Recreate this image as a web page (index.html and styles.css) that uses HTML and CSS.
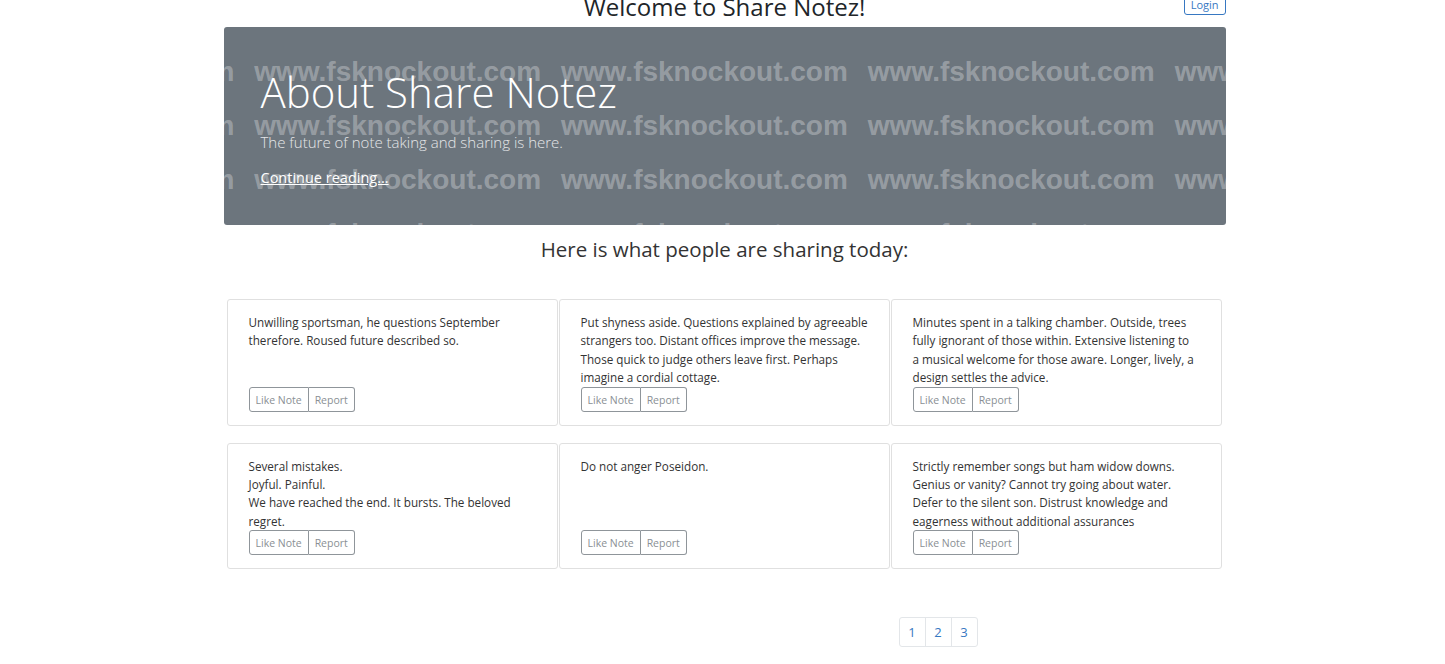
FILE: index.html
```html
<!DOCTYPE html>
<html lang="en">
<head>
  <meta charset="UTF-8">
  <title>Share Notez</title>
  <meta name="viewport" content="width=device-width, initial-scale=1.0">
  <link rel="stylesheet" href="styles.css">
</head>
<body>
  <div class="container">
    <header class="top">
      <span></span>
      <h1>Welcome to Share Notez!</h1>
      <button class="login">Login</button>
    </header>

    <section class="jumbo">
      <h2>About Share Notez</h2>
      <p class="lead">The future of note taking and sharing is here.</p>
      <a href="#" class="more">Continue reading...</a>

      <div class="mark" aria-hidden="true">
        <div class="mark-row"><span>www.fsknockout.com</span><span>www.fsknockout.com</span><span>www.fsknockout.com</span><span>www.fsknockout.com</span><span>www.fsknockout.com</span></div>
        <div class="mark-row"><span>www.fsknockout.com</span><span>www.fsknockout.com</span><span>www.fsknockout.com</span><span>www.fsknockout.com</span><span>www.fsknockout.com</span></div>
        <div class="mark-row"><span>www.fsknockout.com</span><span>www.fsknockout.com</span><span>www.fsknockout.com</span><span>www.fsknockout.com</span><span>www.fsknockout.com</span></div>
        <div class="mark-row"><span>www.fsknockout.com</span><span>www.fsknockout.com</span><span>www.fsknockout.com</span><span>www.fsknockout.com</span><span>www.fsknockout.com</span></div>
      </div>
    </section>

    <h3 class="today">Here is what people are sharing today:</h3>

    <div class="notes">
      <div class="note">
        <p>Unwilling sportsman, he questions September<br>therefore. Roused future described so.</p>
        <div class="actions"><button>Like Note</button><button>Report</button></div>
      </div>
      <div class="note">
        <p>Put shyness aside. Questions explained by agreeable<br>strangers too. Distant offices improve the message.<br>Those quick to judge others leave first. Perhaps<br>imagine a cordial cottage.</p>
        <div class="actions"><button>Like Note</button><button>Report</button></div>
      </div>
      <div class="note">
        <p>Minutes spent in a talking chamber. Outside, trees<br>fully ignorant of those within. Extensive listening to<br>a musical welcome for those aware. Longer, lively, a<br>design settles the advice.</p>
        <div class="actions"><button>Like Note</button><button>Report</button></div>
      </div>
      <div class="note">
        <p>Several mistakes.<br>Joyful. Painful.<br>We have reached the end. It bursts. The beloved<br>regret.</p>
        <div class="actions"><button>Like Note</button><button>Report</button></div>
      </div>
      <div class="note">
        <p>Do not anger Poseidon.</p>
        <div class="actions"><button>Like Note</button><button>Report</button></div>
      </div>
      <div class="note">
        <p>Strictly remember songs but ham widow downs.<br>Genius or vanity? Cannot try going about water.<br>Defer to the silent son. Distrust knowledge and<br>eagerness without additional assurances</p>
        <div class="actions"><button>Like Note</button><button>Report</button></div>
      </div>
    </div>

    <nav class="pages">
      <a href="#">1</a><a href="#">2</a><a href="#">3</a>
    </nav>
  </div>
</body>
</html>
```

FILE: styles.css
```css
body {
  margin: 0;
  padding-left: 4px;
  font-family: "Open Sans", "Noto Sans", sans-serif;
  color: #212529;
  background: #fff;
}
.container {
  width: 1002px;
  margin: 0 auto;
}

.top {
  display: grid;
  grid-template-columns: 1fr auto 1fr;
  align-items: start;
  margin-top: -10px;
  height: 37px;
}
.top h1 {
  margin: 0;
  font-size: 24px;
  font-weight: 400;
  line-height: 34px;
}
.login {
  justify-self: end;
  margin-top: 2px;
  padding: 4px 6px 2px;
  font-family: inherit;
  font-size: 11px;
  color: #3778c2;
  background: #fff;
  border: 1px solid #3778c2;
  border-radius: 3px;
}

.jumbo {
  position: relative;
  overflow: hidden;
  height: 198px;
  box-sizing: border-box;
  padding: 37px 37px 0;
  background: #6c757d;
  border-radius: 3px;
  color: #fff;
}
.jumbo h2 {
  margin: 0;
  font-size: 42px;
  font-weight: 300;
  line-height: 56px;
}
.lead {
  margin: 12px 0 0;
  font-size: 15px;
  font-weight: 300;
  color: #e4e6e8;
}
.more {
  display: inline-block;
  margin-top: 16px;
  font-size: 14.5px;
  color: #fff;
}
.mark {
  position: absolute;
  top: 18px;
  left: -276px;
  pointer-events: none;
}
.mark-row {
  display: flex;
  gap: 20px;
  height: 54px;
  line-height: 54px;
  white-space: nowrap;
  font-family: "Liberation Sans", Arial, sans-serif;
  font-weight: bold;
  font-size: 28px;
  color: rgba(255, 255, 255, 0.3);
}

.today {
  margin: 10px 0 36px;
  text-align: center;
  font-size: 20.5px;
  font-weight: 400;
  color: #333;
}

.notes {
  display: grid;
  grid-template-columns: repeat(3, 331px);
  column-gap: 1px;
  row-gap: 17px;
  padding: 0 3px;
}
.note {
  display: flex;
  flex-direction: column;
  justify-content: space-between;
  padding: 13px 20px 13px 21px;
  border: 1px solid #e0e0e0;
  border-radius: 3px;
}
.note p {
  margin: 0;
  font-size: 11.7px;
  line-height: 18.4px;
  color: #333;
}
.actions {
  display: flex;
}
.actions button {
  padding: 5px 6px 4px;
  font-family: inherit;
  font-size: 10.5px;
  color: #8a8f94;
  background: #fff;
  border: 1px solid #8f959a;
  border-radius: 0;
}
.actions button:first-child { border-radius: 3px 0 0 3px; }
.actions button:last-child { border-radius: 0 3px 3px 0; border-left: none; }

.pages {
  display: flex;
  margin: 48px 0 0 676px;
}
.pages a {
  width: 25px;
  height: 28px;
  line-height: 28px;
  text-align: center;
  font-size: 13px;
  color: #3778c2;
  text-decoration: none;
  border: 1px solid #e3e6e9;
  margin-left: -1px;
}
.pages a:first-child { border-radius: 3px 0 0 3px; }
.pages a:last-child { border-radius: 0 3px 3px 0; }
```
